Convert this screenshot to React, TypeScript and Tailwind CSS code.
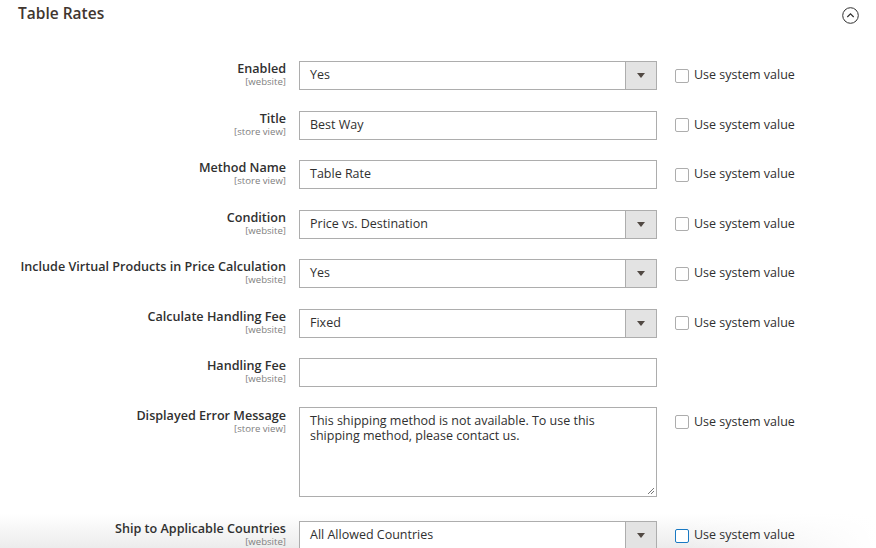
import { FC } from 'react';

interface Row {
  label: string;
  scope: string;
  kind: 'select' | 'input' | 'textarea';
  value: string;
  system?: boolean;
  focus?: boolean;
}

const rows: Row[] = [
  { label: 'Enabled', scope: '[website]', kind: 'select', value: 'Yes', system: true },
  { label: 'Title', scope: '[store view]', kind: 'input', value: 'Best Way', system: true },
  { label: 'Method Name', scope: '[store view]', kind: 'input', value: 'Table Rate', system: true },
  { label: 'Condition', scope: '[website]', kind: 'select', value: 'Price vs. Destination', system: true },
  {
    label: 'Include Virtual Products in Price Calculation',
    scope: '[website]',
    kind: 'select',
    value: 'Yes',
    system: true,
  },
  { label: 'Calculate Handling Fee', scope: '[website]', kind: 'select', value: 'Fixed', system: true },
  { label: 'Handling Fee', scope: '[website]', kind: 'input', value: '' },
  {
    label: 'Displayed Error Message',
    scope: '[store view]',
    kind: 'textarea',
    value: 'This shipping method is not available. To use this shipping method, please contact us.',
    system: true,
  },
  {
    label: 'Ship to Applicable Countries',
    scope: '[website]',
    kind: 'select',
    value: 'All Allowed Countries',
    system: true,
    focus: true,
  },
];

const Field: FC<{ row: Row }> = ({ row }) => {
  if (row.kind === 'textarea') {
    return (
      <div className="relative mb-[4px] mt-[-1px] h-[90px] w-[358px] border border-[#adadad] bg-white py-[5px] pl-[10px] pr-[40px] text-[12.5px] leading-[15px] text-[#303030]">
        {row.value}
        <svg className="absolute bottom-[1px] right-[1px]" width="8" height="8" viewBox="0 0 8 8">
          <path d="M7 1 L1 7 M7 4 L4 7" stroke="#777" strokeWidth="1" />
        </svg>
      </div>
    );
  }
  return (
    <div className="flex h-[29px] w-[358px] border border-[#adadad] bg-white text-[12.5px] text-[#303030]">
      <div className="flex flex-1 items-center px-[10px]">{row.value}</div>
      {row.kind === 'select' && (
        <div className="flex w-[31px] items-center justify-center border-l border-[#adadad] bg-[#e3e3e3]">
          <svg width="8" height="5" viewBox="0 0 8 5">
            <path d="M0 0 H8 L4 5 Z" fill="#514943" />
          </svg>
        </div>
      )}
    </div>
  );
};

const App: FC = () => (
  <div className="relative h-[548px] w-[876px] overflow-hidden bg-white font-['Open_Sans',sans-serif] text-[#303030]">
    <div className="absolute bottom-0 left-0 h-[34px] w-full bg-gradient-to-b from-white to-[#ececec]" />
    <div className="absolute bottom-0 right-0 h-[34px] w-[200px] bg-gradient-to-r from-white/0 to-white" />

    <div className="relative flex items-start justify-between pl-[18px] pr-[17px] pt-[3px]">
      <h2 className="text-[15.5px] font-semibold leading-[20px] text-[#41362f]">Table Rates</h2>
      <svg className="mt-[4px]" width="17" height="17" viewBox="0 0 17 17">
        <circle cx="8.5" cy="8.5" r="7.8" fill="none" stroke="#303030" strokeWidth="1" />
        <path d="M5.3 10 L8.5 6.8 L11.7 10" fill="none" stroke="#303030" strokeWidth="1.2" />
      </svg>
    </div>

    <div className="relative mt-[37px] flex flex-col gap-[20.5px]">
      {rows.map((row, i) => (
        <div key={i} className="flex items-start">
          <div className="flex w-[286px] flex-col items-end pt-[1px]">
            <span className="text-[12.6px] font-semibold leading-[14px] text-[#303030]">{row.label}</span>
            <span className="text-[9.6px] leading-[12px] text-[#808080]">{row.scope}</span>
          </div>
          <div className="ml-[13px]">
            <Field row={row} />
          </div>
          {row.system && (
            <label className="ml-[18px] flex h-[29px] items-center gap-[5px] text-[12.5px] text-[#303030]">
              <span
                className={`h-[14px] w-[14px] rounded-[2px] border bg-white ${
                  row.focus ? 'border-[#1979c3]' : 'border-[#adadad]'
                }`}
              />
              Use system value
            </label>
          )}
        </div>
      ))}
    </div>
  </div>
);

export default App;
